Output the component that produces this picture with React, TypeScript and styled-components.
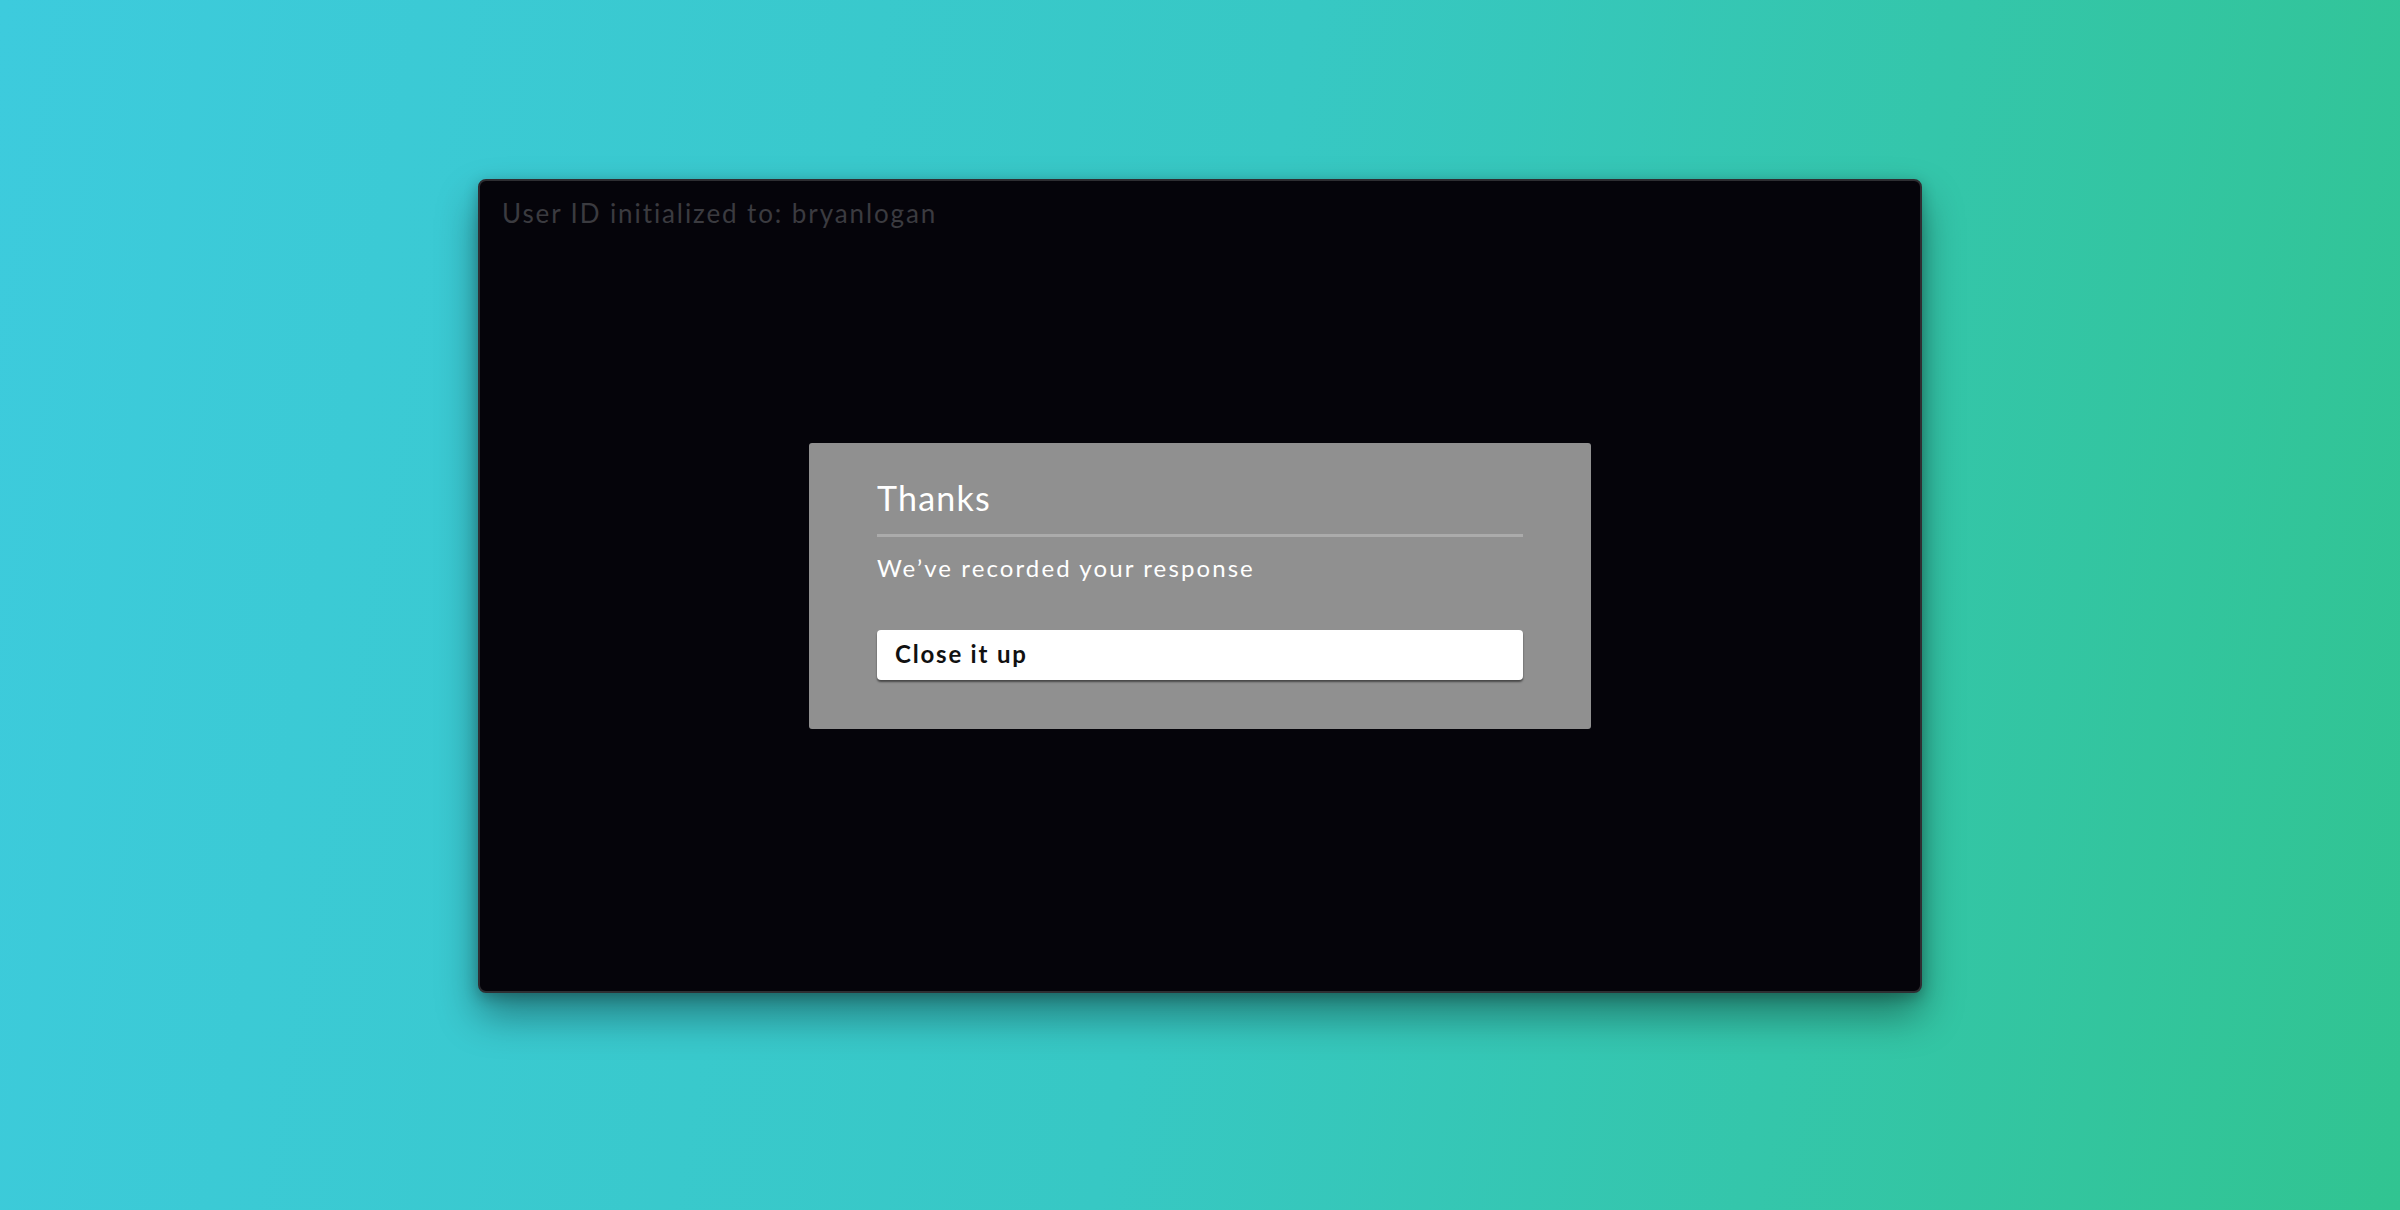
import React from "react";
import styled, { createGlobalStyle } from "styled-components";

const GlobalStyle = createGlobalStyle`
  html, body {
    margin: 0;
    padding: 0;
    height: 100%;
  }
  body {
    font-family: "Lato", "Open Sans", sans-serif;
    background: linear-gradient(100deg, #3dcbdd 0%, #37c8c4 50%, #31c491 100%);
  }
  #root {
    height: 100%;
  }
`;

const Stage = styled.main`
  box-sizing: border-box;
  height: 100vh;
  display: flex;
  align-items: center;
  justify-content: center;
  padding-bottom: 38px;
`;

const Screen = styled.section`
  width: 1440px;
  height: 810px;
  background: #05040a;
  border: 2px solid #2e2e32;
  border-radius: 8px;
  box-shadow: 0 22px 40px rgba(0, 0, 0, 0.38), 0 4px 14px rgba(0, 0, 0, 0.25);
  display: grid;
  grid-template: 1fr / 1fr;
  overflow: hidden;
`;

const StatusLine = styled.div`
  grid-area: 1 / 1;
  align-self: start;
  justify-self: start;
  padding: 17px 0 0 22px;
  font-size: 26px;
  line-height: 1.2;
  color: #3b3b40;
  letter-spacing: 1.9px;
`;

const Dialog = styled.div`
  grid-area: 1 / 1;
  align-self: center;
  justify-self: center;
  box-sizing: border-box;
  width: 782px;
  padding: 35px 68px 49px 68px;
  background: #909090;
  border-radius: 3px;
  display: flex;
  flex-direction: column;
`;

const Title = styled.h2`
  margin: 0;
  font-size: 34px;
  font-weight: 400;
  line-height: 1.2;
  color: #ffffff;
  letter-spacing: 1.2px;
`;

const Divider = styled.hr`
  margin: 15px 0 0 0;
  border: none;
  height: 3px;
  background: #ababab;
`;

const Message = styled.p`
  margin: 17px 0 0 0;
  font-size: 24px;
  line-height: 1.2;
  color: #ffffff;
  letter-spacing: 2.1px;
`;

const ActionButton = styled.button`
  margin-top: 47px;
  height: 50px;
  box-sizing: border-box;
  padding: 0 18px;
  display: flex;
  align-items: center;
  background: #ffffff;
  border: none;
  border-radius: 4px;
  box-shadow: 0 2px 2px rgba(0, 0, 0, 0.5);
  font-family: "Lato", "Open Sans", sans-serif;
  font-size: 24px;
  font-weight: 700;
  line-height: 1.2;
  color: #111111;
  letter-spacing: 1.8px;
  text-align: left;
  cursor: pointer;
`;

export default function App() {
  return (
    <>
      <GlobalStyle />
      <Stage>
        <Screen>
          <StatusLine>User ID initialized to: bryanlogan</StatusLine>
          <Dialog>
            <Title>Thanks</Title>
            <Divider />
            <Message>We’ve recorded your response</Message>
            <ActionButton>Close it up</ActionButton>
          </Dialog>
        </Screen>
      </Stage>
    </>
  );
}
